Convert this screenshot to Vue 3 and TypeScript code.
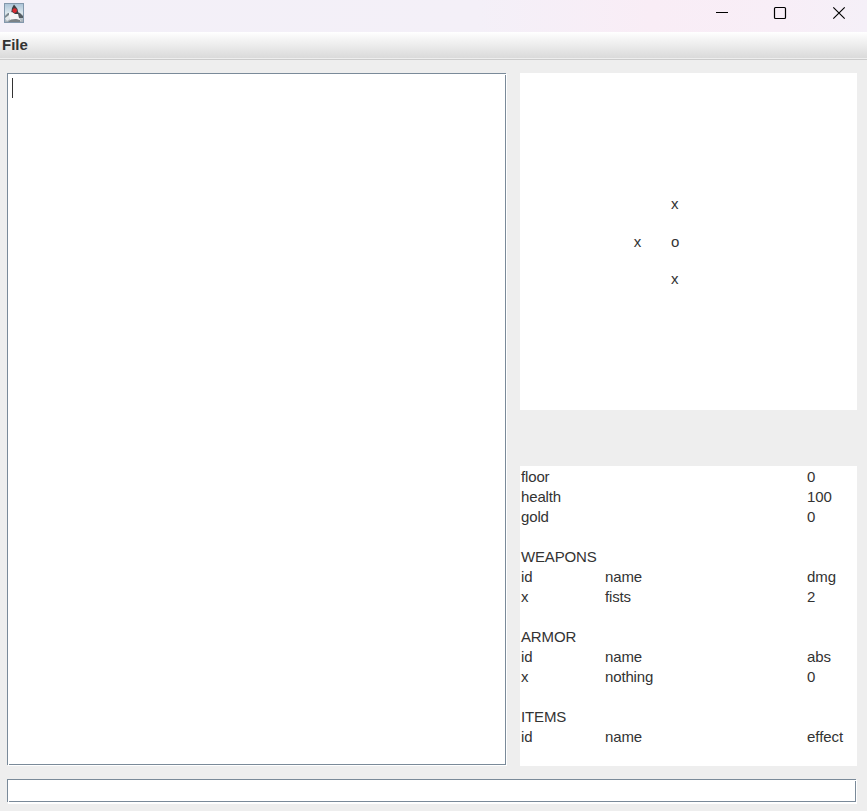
<script setup lang="ts">
interface MapCell {
  row: number
  col: number
  glyph: string
}

const SIZE = 9

const rooms: MapCell[] = [
  { row: 3, col: 4, glyph: 'x' },
  { row: 4, col: 3, glyph: 'x' },
  { row: 4, col: 4, glyph: 'o' },
  { row: 5, col: 4, glyph: 'x' },
]

const cells: string[] = Array.from({ length: SIZE * SIZE }, (_, i) => {
  const room = rooms.find((r) => r.row * SIZE + r.col === i)
  return room ? room.glyph : ''
})

const stats: [string, string, string][] = [
  ['floor', '', '0'],
  ['health', '', '100'],
  ['gold', '', '0'],
  ['', '', ''],
  ['WEAPONS', '', ''],
  ['id', 'name', 'dmg'],
  ['x', 'fists', '2'],
  ['', '', ''],
  ['ARMOR', '', ''],
  ['id', 'name', 'abs'],
  ['x', 'nothing', '0'],
  ['', '', ''],
  ['ITEMS', '', ''],
  ['id', 'name', 'effect'],
  ['', '', ''],
]
</script>

<template>
  <div class="window">
    <header class="titlebar">
      <svg class="app-icon" width="20" height="20" viewBox="0 0 20 20">
        <defs>
          <linearGradient id="sky" x1="0" y1="0" x2="0" y2="1">
            <stop offset="0" stop-color="#a9c2d6" />
            <stop offset="0.5" stop-color="#dce7ed" />
            <stop offset="1" stop-color="#a2abb2" />
          </linearGradient>
        </defs>
        <rect x="0.5" y="0.5" width="19" height="19" fill="url(#sky)" stroke="#8398ac" />
        <path d="M1 13 L4 10 L7 10 L6 15 L1 15 Z" fill="#7d888f" />
        <path d="M13 9 L16 10 L19 13 V15 H14 Z" fill="#555d63" />
        <path d="M10 1.5 L13.5 6 L14.5 11 L7 11 L8 5 Z" fill="#3c3f43" />
        <path d="M5 10 L8 9 L11 11 L14 11 L15 15 L17 18 L12 16 L7 18 L5 15 Z" fill="#f5f6f7" />
        <path d="M1 15 L5 12 L6 16 L3 18 Z" fill="#e3e8eb" />
        <path d="M4 19 L7 16.5 L12 16 L16 17 V19 Z" fill="#7b8286" />
        <circle cx="10.7" cy="7.6" r="2.3" fill="#db2a30" />
      </svg>
      <div class="controls">
        <svg width="58" height="32" viewBox="0 0 58 32">
          <path d="M23 12.5 H35" stroke="#000" fill="none" />
        </svg>
        <svg width="58" height="32" viewBox="0 0 58 32">
          <rect x="23.5" y="7.5" width="11" height="11" rx="1" stroke="#000" stroke-width="1.2" fill="none" />
        </svg>
        <svg width="58" height="32" viewBox="0 0 58 32">
          <path d="M24.3 7.3 L35.7 18.7 M35.7 7.3 L24.3 18.7" stroke="#000" stroke-width="1.15" fill="none" />
        </svg>
      </div>
    </header>
    <nav class="menubar"><span>File</span></nav>
    <main class="content">
      <div class="upper">
        <section class="field log"><i class="caret"></i></section>
        <aside class="side">
          <div class="map">
            <span v-for="(glyph, i) in cells" :key="i">{{ glyph }}</span>
          </div>
          <div class="stats">
            <template v-for="(row, r) in stats" :key="r">
              <span v-for="(text, c) in row" :key="c">{{ text }}</span>
            </template>
          </div>
        </aside>
      </div>
      <section class="field command"></section>
    </main>
  </div>
</template>

<style>
body {
  margin: 0;
  overflow: hidden;
}
</style>

<style scoped>
.window {
  display: flex;
  flex-direction: column;
  width: 867px;
  height: 811px;
  background: #eeeeee;
  color: #333333;
  font: 15px/20px "Liberation Sans", Arial, sans-serif;
}
.titlebar {
  display: flex;
  justify-content: space-between;
  flex: none;
  height: 32px;
  background: linear-gradient(90deg, #f3f0f8 0%, #f4f0f8 55%, #f9edf6 75%, #f8eef7 90%, #f5f0f8 100%);
}
.app-icon {
  margin: 3px 0 0 4px;
}
.controls {
  display: flex;
  width: 174px;
}
.controls svg {
  flex: none;
}
.menubar {
  flex: none;
  box-sizing: border-box;
  height: 28px;
  padding: 3px 2px;
  border-bottom: 1px solid #cccccc;
  background: linear-gradient(#ffffff, #dadada 26px, #eeeeee 26px);
  font-weight: bold;
}
.content {
  display: flex;
  flex-direction: column;
  gap: 13px;
  padding: 13px 10px 0 7px;
}
.upper {
  display: flex;
  gap: 13px;
}
.field {
  position: relative;
  box-sizing: border-box;
  background: #ffffff;
  border: 1px solid #7a8a99;
  box-shadow: 1px 1px 0 #ffffff;
}
.field::before,
.field::after {
  content: "";
  position: absolute;
  width: 1px;
  height: 1px;
  background: #ffffff;
}
.field::before {
  top: 0;
  right: -1px;
}
.field::after {
  bottom: -1px;
  left: 0;
}
.log {
  width: 499px;
  height: 692px;
  margin: 0 1px 1px 0;
  padding: 4px;
}
.caret {
  display: block;
  width: 1px;
  height: 20px;
  background: #333333;
}
.command {
  width: 849px;
  height: 23px;
  box-shadow: 1px 1px 0 #ffffff, 1px 2px 0 #ffffff;
}
.side {
  display: flex;
  flex-direction: column;
  gap: 56px;
  width: 337px;
}
.map {
  display: grid;
  grid-template: repeat(9, 1fr) / repeat(9, 1fr);
  align-items: center;
  height: 337px;
  background: #ffffff;
}
.map span {
  padding: 0.5px 0 0 1.3px;
}
.stats {
  display: grid;
  grid-template-columns: 84px 202px 51px;
  grid-auto-rows: 20px;
  height: 300px;
  background: #ffffff;
  letter-spacing: -0.15px;
}
.stats span {
  padding-left: 1px;
  line-height: 22px;
  white-space: nowrap;
}
.stats span:nth-child(3n) {
  letter-spacing: -0.05px;
}
</style>
